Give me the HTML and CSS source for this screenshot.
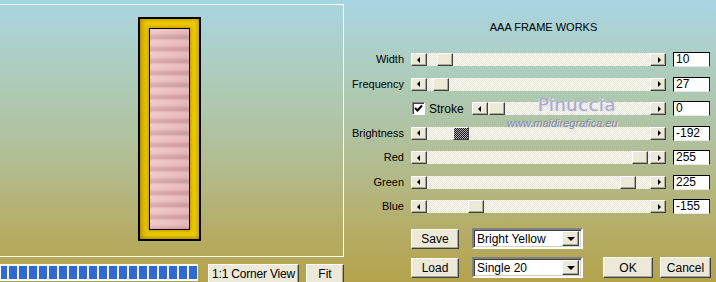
FILE: index.html
```html
<!DOCTYPE html>
<html>
<head>
<meta charset="utf-8">
<link rel="stylesheet" href="styles.css">
</head>
<body>
<div class="app">
  <div class="left">
    <div class="preview">
      <div class="frame"><div class="mat"><div class="pic"></div></div></div>
    </div>
    <div class="bottombar">
      <div class="progress"></div>
      <div class="btn corner">1:1 Corner View</div>
      <div class="btn fit">Fit</div>
    </div>
  </div>
  <div class="right">
    <div class="title">AAA FRAME WORKS</div>
    <div class="rows">
      <div class="row">
        <div class="label">Width</div>
        <div class="slider"><div class="arrow l"></div><div class="track"><div class="thumb" style="left:10px"></div></div><div class="arrow r"></div></div>
        <div class="num">10</div>
      </div>
      <div class="row">
        <div class="label">Frequency</div>
        <div class="slider"><div class="arrow l"></div><div class="track"><div class="thumb" style="left:6px"></div></div><div class="arrow r"></div></div>
        <div class="num">27</div>
      </div>
      <div class="row">
        <div class="label"></div>
        <div class="stroke">
          <div class="check"><svg width="9" height="9" viewBox="0 0 9 9"><path d="M1 4 L3.5 6.5 L8 1.5" fill="none" stroke="#000" stroke-width="2"/></svg></div>
          <span class="stroke-text">Stroke</span>
          <div class="slider short"><div class="arrow l"></div><div class="track"><div class="thumb" style="left:1px"></div></div><div class="arrow r"></div></div>
        </div>
        <div class="num">0</div>
      </div>
      <div class="row">
        <div class="label">Brightness</div>
        <div class="slider"><div class="arrow l"></div><div class="track"><div class="thumb focus" style="left:26px"></div></div><div class="arrow r"></div></div>
        <div class="num">-192</div>
      </div>
      <div class="row">
        <div class="label">Red</div>
        <div class="slider"><div class="arrow l"></div><div class="track"><div class="thumb" style="left:205px"></div></div><div class="arrow r"></div></div>
        <div class="num">255</div>
      </div>
      <div class="row">
        <div class="label">Green</div>
        <div class="slider"><div class="arrow l"></div><div class="track"><div class="thumb" style="left:193px"></div></div><div class="arrow r"></div></div>
        <div class="num">225</div>
      </div>
      <div class="row">
        <div class="label">Blue</div>
        <div class="slider"><div class="arrow l"></div><div class="track"><div class="thumb" style="left:41px"></div></div><div class="arrow r"></div></div>
        <div class="num">-155</div>
      </div>
    </div>
    <div class="actions">
      <div class="arow">
        <div class="btn small">Save</div>
        <div class="combo"><span class="combo-text">Bright Yellow</span><div class="drop"></div></div>
      </div>
      <div class="arow">
        <div class="btn small">Load</div>
        <div class="combo"><span class="combo-text">Single 20</span><div class="drop"></div></div>
        <div class="btn ok">OK</div>
        <div class="btn cancel">Cancel</div>
      </div>
    </div>
  </div>
  <div class="wm-name">Pinuccia</div>
  <div class="wm-url">www.maidiregrafica.eu</div>
</div>
</body>
</html>
```
FILE: styles.css
```css
* { box-sizing: border-box; }
html, body { margin: 0; padding: 0; }
body { width: 716px; height: 282px; overflow: hidden; }
.app {
  position: relative;
  display: flex;
  width: 716px;
  height: 282px;
  font-family: "Liberation Sans", Arial, sans-serif;
  font-size: 11px;
  color: #000;
  background: linear-gradient(to bottom, #a9d5e3 0%, #aecbb6 30%, #b0c2a0 48%, #b3b884 65%, #b5ad66 82%, #b4a34c 100%);
  overflow: hidden;
}
.left { width: 345px; flex: none; padding-top: 4px; }
.preview {
  width: 344px;
  height: 253px;
  border: 1px solid #fff;
  border-left: none;
  padding-top: 12px;
  padding-left: 138px;
}
.frame {
  width: 63px;
  height: 224px;
  border: 2px solid #000;
  padding: 9px;
  background: #ebc900;
  box-shadow: inset 3px 0 4px rgba(140, 105, 0, 0.45), inset -2px 0 3px rgba(140, 105, 0, 0.25), inset 0 -2px 3px rgba(140,105,0,0.3);
}
.mat {
  width: 41px;
  height: 202px;
  border: 1px solid #000;
  box-shadow: 0 0 3px 1px rgba(150, 115, 0, 0.55);
}
.pic {
  width: 39px;
  height: 200px;
  background:
    linear-gradient(to right, rgba(255,255,255,0.12), rgba(255,255,255,0) 50%, rgba(120,60,60,0.08)),
    repeating-linear-gradient(to bottom, #f0c5c5 0, #ecbfbf 4px, #d7a7a7 7px, #d3a2a2 9px, #e6b9b9 11px, #f0c5c5 12px);
}
.bottombar {
  display: flex;
  align-items: flex-start;
  margin-top: 7px;
}
.progress {
  width: 198px;
  height: 17px;
  background-color: #f6f6f6;
  border: 1px solid #fff;
  background-image: repeating-linear-gradient(to right, #3169d3 0 6px, transparent 6px 8px, #3169d3 8px 10px);
  background-size: 100% 13px;
  background-position: 0 1px;
  background-repeat: no-repeat;
  flex: none;
}
.btn {
  display: flex;
  align-items: center;
  justify-content: center;
  background: #ece9d8;
  border: 1px solid;
  border-color: #fff #404040 #404040 #fff;
  box-shadow: inset -1px -1px 0 #aca899;
  flex: none;
  white-space: nowrap;
}
.corner { margin-left: 10px; width: 91px; height: 20px; font-size: 12px; letter-spacing: -0.2px; }
.fit { margin-left: 7px; width: 38px; height: 20px; font-size: 12px; }
.right { flex: 1; padding-top: 21px; }
.title {
  padding-left: 26px;
  text-align: center;
  line-height: 13px;
}
.rows {
  margin-top: 18px;
  display: flex;
  flex-direction: column;
  gap: 9.5px;
}
.row {
  display: grid;
  grid-template-columns: 59px 255px 37px;
  column-gap: 7px;
  height: 15px;
  align-items: center;
}
.label { text-align: right; line-height: 13px; }
.slider {
  display: flex;
  height: 13px;
}
.slider.short { width: 194px; }
.arrow {
  width: 16px;
  height: 13px;
  flex: none;
  background: #ece9d8;
  border: 1px solid;
  border-color: #fff #404040 #404040 #fff;
  box-shadow: inset -1px -1px 0 #aca899;
  display: flex;
  align-items: center;
  justify-content: center;
}
.arrow::before {
  content: "";
  width: 0;
  height: 0;
  border-top: 3px solid transparent;
  border-bottom: 3px solid transparent;
}
.arrow.l::before { border-right: 3px solid #000; margin-right: 2px; }
.arrow.r::before { border-left: 3px solid #000; margin-left: 2px; }
.track {
  position: relative;
  flex: 1;
  background: repeating-conic-gradient(#e6e2d0 0 25%, #fff 0 50%) 0 0 / 2px 2px;
}
.thumb {
  position: absolute;
  top: 0;
  width: 16px;
  height: 13px;
  background: #ece9d8;
  border: 1px solid;
  border-color: #fff #404040 #404040 #fff;
  box-shadow: inset -1px -1px 0 #aca899;
}
.thumb.focus {
  border-color: #fff #404040 #404040 #fff;
  background: repeating-conic-gradient(#1a1a1a 0 25%, #b0b0b0 0 50%) 0 0 / 2px 2px;
  box-shadow: none;
}
.num {
  height: 15px;
  background: #fff;
  border: 1px solid;
  border-color: #000 #222 #e8e8e8 #000;
  padding-left: 2px;
  line-height: 13px;
  font-size: 12px;
}
.stroke {
  display: flex;
  align-items: center;
  height: 13px;
}
.check {
  width: 13px;
  height: 13px;
  margin-left: 1px;
  background: #fff;
  border: 1px solid;
  border-color: #808080 #fff #fff #808080;
  box-shadow: inset 1px 1px 0 #404040;
  display: flex;
  align-items: center;
  justify-content: center;
  flex: none;
}
.stroke-text { margin-left: 4px; width: 43px; font-size: 12px; }
.actions {
  margin-top: 14px;
  margin-left: 66px;
  display: flex;
  flex-direction: column;
  gap: 8px;
}
.arow { display: flex; align-items: center; height: 21px; }
.btn.small { width: 48px; height: 20px; font-size: 12px; }
.combo {
  margin-left: 13px;
  width: 111px;
  height: 21px;
  background: #fff;
  border: 2px solid;
  border-color: #808080 #fff #fff #808080;
  box-shadow: inset 1px 1px 0 #404040, inset -1px -1px 0 #d4d0c8;
  display: flex;
  align-items: center;
  padding: 1px 2px 1px 3px;
}
.combo-text { flex: 1; font-size: 12px; }
.drop {
  width: 17px;
  height: 15px;
  background: #ece9d8;
  border: 1px solid;
  border-color: #fff #404040 #404040 #fff;
  box-shadow: inset -1px -1px 0 #aca899;
  display: flex;
  align-items: center;
  justify-content: center;
}
.drop::before {
  content: "";
  border-left: 4px solid transparent;
  border-right: 4px solid transparent;
  border-top: 4px solid #000;
  margin-top: 1px;
}
.btn.ok { margin-left: 20px; width: 50px; height: 21px; font-size: 12px; }
.btn.cancel { margin-left: 7px; width: 51px; height: 21px; font-size: 12px; }
.wm-name {
  position: absolute;
  left: 538px;
  top: 94px;
  font-family: "DejaVu Sans", sans-serif;
  font-size: 18px;
  letter-spacing: 0.5px;
  color: #a9a9cc;
  text-shadow: 1px 1px 0 #e8e8f4, -1px 0 0 #d8d8ea;
  pointer-events: none;
}
.wm-url {
  position: absolute;
  left: 507px;
  top: 117px;
  font-size: 11px;
  font-style: italic;
  color: #8a8aa2;
  text-shadow: 1px 1px 0 #e4e4ee;
  pointer-events: none;
}
```
